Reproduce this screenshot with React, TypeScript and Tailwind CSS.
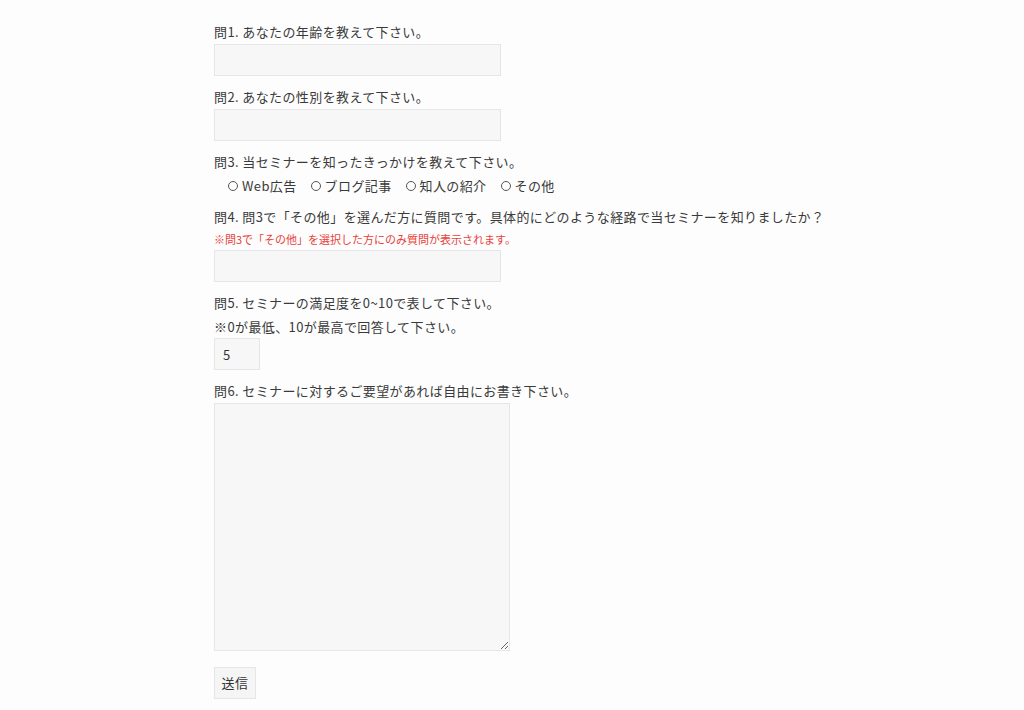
const font = {
  fontFamily: '"Noto Sans CJK JP", "Noto Sans", sans-serif',
};

function Field({ label, children }: { label: string; children: React.ReactNode }) {
  return (
    <div className="mb-[9px]">
      <p className="h-6 leading-6">{label}</p>
      {children}
    </div>
  );
}

const inputCls =
  "block h-8 w-[287px] border border-[#e6e6e6] bg-[#f7f7f7] px-2 text-[13px] text-[#333] outline-none";

export default function App() {
  const options = ["Web広告", "ブログ記事", "知人の紹介", "その他"];

  return (
    <div
      className="min-h-[710px] w-full bg-[#fdfdfd] text-[13px] tracking-[0.03em] text-[#3a3a3a]"
      style={font}
    >
      <form className="ml-[214px] pt-5" onSubmit={(e) => e.preventDefault()}>
        <Field label="問1. あなたの年齢を教えて下さい。">
          <input type="text" className={inputCls} />
        </Field>

        <Field label="問2. あなたの性別を教えて下さい。">
          <input type="text" className={inputCls} />
        </Field>

        <div className="mb-[7px]">
          <p className="h-6 leading-6">問3. 当セミナーを知ったきっかけを教えて下さい。</p>
          <div className="flex h-6 items-center gap-[14px] pl-[14px]">
            {options.map((opt) => (
              <label key={opt} className="flex items-center gap-[4px]">
                <span className="inline-block h-[10px] w-[10px] rounded-full border border-[#555]" />
                <span>{opt}</span>
              </label>
            ))}
          </div>
        </div>

        <div className="mb-[9px]">
          <p className="h-6 leading-6">
            問4. 問3で「その他」を選んだ方に質問です。具体的にどのような経路で当セミナーを知りましたか？
          </p>
          <p className="h-[21px] text-[11px] leading-[21px] tracking-normal text-[#e8423a]">
            ※問3で「その他」を選択した方にのみ質問が表示されます。
          </p>
          <input type="text" className={inputCls} />
        </div>

        <div className="mb-[9px]">
          <p className="h-6 leading-6">問5. セミナーの満足度を0~10で表して下さい。</p>
          <p className="h-[23px] leading-[23px]">※0が最低、10が最高で回答して下さい。</p>
          <input
            type="text"
            defaultValue="5"
            className="block h-8 w-[46px] border border-[#e6e6e6] bg-[#f7f7f7] px-2 text-[13px] text-[#333] outline-none"
          />
        </div>

        <div className="mb-4">
          <p className="h-6 leading-6">問6. セミナーに対するご要望があれば自由にお書き下さい。</p>
          <textarea className="block h-[248px] w-[296px] border border-[#e6e6e6] bg-[#f7f7f7] p-2 text-[13px] outline-none" />
        </div>

        <button
          type="submit"
          className="h-8 w-[42px] border border-[#e6e6e6] bg-[#f5f5f5] text-[13px] text-[#333]"
        >
          送信
        </button>
      </form>
    </div>
  );
}
